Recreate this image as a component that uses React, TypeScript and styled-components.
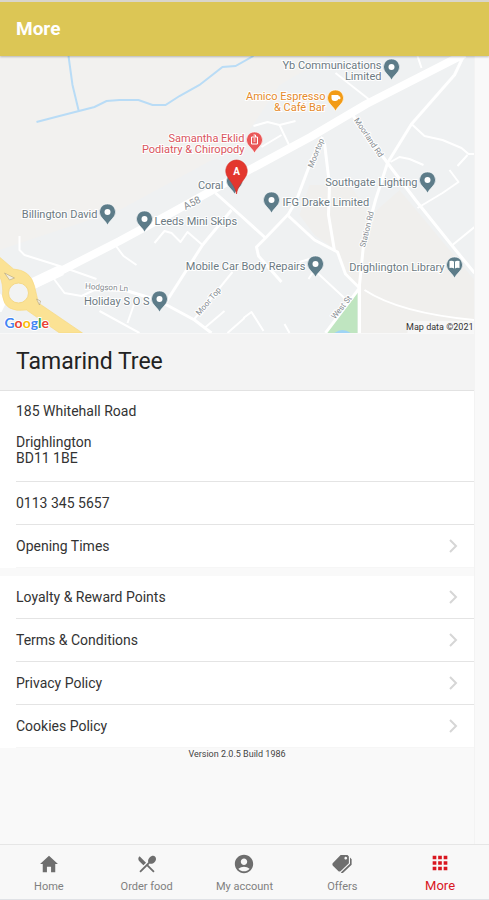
import React from "react";
import styled, { createGlobalStyle } from "styled-components";
import { IoMdHome, IoMdPricetags } from "react-icons/io";
import { MdAccountCircle, MdApps, MdRestaurantMenu } from "react-icons/md";

const GlobalStyle = createGlobalStyle`
  *, *::before, *::after { box-sizing: border-box; }
  body {
    margin: 0;
    background: #f9f9f9;
    color: #333;
    font-family: Roboto, "Liberation Sans", sans-serif;
    font-size: 14px;
  }
`;

const Screen = styled.div`
  display: flex;
  flex-direction: column;
  min-height: 100vh;
`;

const Header = styled.header`
  display: flex;
  align-items: center;
  height: 56px;
  padding: 0 16px;
  border-top: 2px solid #d9d5cb;
  background: #dcc655;
  box-shadow: 0 1px 2px rgba(0, 0, 0, 0.25);
  z-index: 1;
`;

const HeaderTitle = styled.h1`
  margin: 0;
  color: #fff;
  font-size: 19px;
  line-height: 24px;
  font-weight: 700;
`;

const Content = styled.main`
  flex: 1;
  margin-right: 14px;
  border-right: 1px solid #f3f3f3;
`;

const MapView = styled.svg`
  display: block;
  width: 100%;
  height: 277px;
  background: #f2f1ef;
`;

const VenueName = styled.h2`
  margin: 0;
  padding: 14px 16px;
  border-top: 1px solid #f8f8f8;
  border-bottom: 1px solid #e2e2e2;
  background: #f3f3f3;
  color: #222;
  font-size: 23px;
  line-height: 28px;
  font-weight: 400;
`;

const List = styled.div<{ $spaced?: boolean }>`
  margin-top: ${(p) => (p.$spaced ? 8 : 0)}px;
  padding-left: 16px;
  background: #fff;
`;

const Address = styled.address`
  padding: 12px 16px 15px 0;
  border-bottom: 1px solid #e4e4e4;
  font-style: normal;
  line-height: 16px;
`;

const AddressLine = styled.div<{ $gap?: boolean }>`
  margin-bottom: ${(p) => (p.$gap ? 15 : 0)}px;
`;

const Row = styled.a`
  display: flex;
  align-items: center;
  justify-content: space-between;
  height: 43px;
  padding-right: 16px;
  border-bottom: 1px solid #e4e4e4;
  color: inherit;
  line-height: 16px;
  text-decoration: none;
  &:last-child { border-bottom-color: #f6f6f6; }
`;

const Arrow = styled.svg`
  width: 10px;
  height: 16px;
  fill: none;
  stroke: #d6d6d6;
  stroke-width: 2;
`;

const Version = styled.p`
  margin: 0;
  text-align: center;
  color: #444;
  font-size: 9px;
  line-height: 12px;
`;

const TabBar = styled.nav`
  display: grid;
  grid-template-columns: repeat(5, 1fr);
  height: 56px;
  border-top: 1px solid #e6e6e6;
  border-bottom: 1px solid #e0e2e6;
  background: #f8f8f8;
`;

const Tab = styled.button<{ $active?: boolean }>`
  display: flex;
  flex-direction: column;
  align-items: center;
  gap: 4px;
  padding: ${(p) => (p.$active ? 7 : 8)}px 0 0;
  border: 0;
  background: none;
  color: ${(p) => (p.$active ? "#d9161f" : "#808080")};
  font-family: inherit;
  font-size: ${(p) => (p.$active ? 13 : 11)}px;
  line-height: 16px;
  cursor: pointer;
  svg {
    width: 22px;
    height: 22px;
    color: ${(p) => (p.$active ? "#d9161f" : "#6e6e6e")};
  }
`;

const Label = styled.text<{ $tone?: string; $end?: boolean }>`
  font-family: Roboto, "Liberation Sans", sans-serif;
  font-size: 11px;
  fill: ${(p) => p.$tone ?? "#6c7a82"};
  stroke: #fff;
  stroke-width: 2px;
  paint-order: stroke;
  text-anchor: ${(p) => (p.$end ? "end" : "start")};
`;

const StreetLabel = styled.text<{ $large?: boolean }>`
  font-family: Roboto, "Liberation Sans", sans-serif;
  font-size: ${(p) => (p.$large ? 10 : 8)}px;
  fill: #858b90;
  stroke: #fff;
  stroke-width: 2px;
  paint-order: stroke;
  text-anchor: middle;
`;

const Credit = styled.text`
  font-family: Roboto, "Liberation Sans", sans-serif;
  font-size: 9px;
  fill: #333;
  text-anchor: end;
`;

const MarkerLetter = styled.text`
  font-family: Roboto, "Liberation Sans", sans-serif;
  font-size: 10px;
  font-weight: 700;
  fill: #fff;
  text-anchor: middle;
`;

const Brand = styled.text`
  font-family: Lato, "Liberation Sans", sans-serif;
  font-size: 14px;
  font-weight: 700;
  stroke: #fff;
  stroke-width: 2px;
  paint-order: stroke;
`;

const brandLetters = [
  ["G", "#4285f4"], ["o", "#ea4335"], ["o", "#fbbc05"],
  ["g", "#4285f4"], ["l", "#34a853"], ["e", "#ea4335"],
];

const minorRoads = [
  "M336 73L369 99", "M418 56L422 68",
  "M412 124L425 136L443 140L462 148L469 154H475M468 155L458 166",
  "M391 162L400 157L410 159L424 165",
  "M254 126L268 122L280 125L296 121M280 125L291 148M282 135L262 147",
  "M450 170L459 182L443 193L418 208", "M453 245L475 227",
  "M318 273L346 299", "M365 290Q400 313 475 320",
  "M244 318L252 312L264 331", "M285 324L290 333",
  "M155 243L165 231L172 233L181 242L188 232L203 245",
  "M115 244L124 256L137 265", "M20 236V250L25 255L60 266L97 279",
  "M53 277L65 293L82 296L95 290L128 291", "M100 311L140 333M136 300L128 323",
  "M233 272L194 320", "M225 311L205 328M245 318L228 333",
  "M310 259L300 262", "M315 270L309 279",
];

const roads = [
  "M464 56L455 75L412 124L388 163L376 200L364 245L360 285V333",
  "M353 115L388 163L416 200L452 245L475 273",
  "M323 137L312 160L297 200L289 214L266 238L257 247L259 256L282 282",
  "M325 143L330 185L329 215L335 251",
  "M289 216L315 240L338 252L346 274L360 288L326 333",
  "M216 193L244 218L266 238", "M232 210L203 245L166 303",
  "M128 291L158 300L195 320L212 333",
];

type PinProps = { x: number; y: number; fill?: string; children?: React.ReactNode };

/* Teardrop marker; x/y locate the middle of its round head. */
const Pin = ({ x, y, fill = "#5d7c89", children }: PinProps) => (
  <g transform={`translate(${x} ${y})`}>
    <path d="M0-8A8 8 0 0 1 7 4C5 7 2 9 0 13C-2 9-5 7-7 4A8 8 0 0 1 0-8Z" fill={fill} stroke="#fff" strokeWidth="0.6" />
    {children ?? <circle r="3" fill="#fff" />}
  </g>
);

const VenueMap = () => (
  <MapView viewBox="0 56 475 277" preserveAspectRatio="xMidYMid slice" role="img" aria-label="Map of Drighlington">
    <path d="M0 250L120 210L240 145L280 85L330 56H475V333H0Z" fill="#eff1f2" />
    <path d="M300 215L315 235L338 251L346 274L360 288V333H475V280L400 190L372 215L350 185L310 185Z" fill="#f0efed" />
    <path d="M326 333L358 292V333Z" fill="#bfe5c0" />
    <path d="M335 333Q343 327 351 333Z" fill="#9fd4f5" />
    <path d="M69 56L73 85L79 110M37 122L60 116L95 107L107 101L120 100H139L153 105H166L180 96L200 85L223 67L236 66L254 56" fill="none" stroke="#b9dcf6" strokeWidth="2" />
    <g fill="none" stroke="#fff" strokeLinejoin="round">
      <g strokeWidth="2">{minorRoads.map((d) => <path key={d} d={d} />)}</g>
      <g strokeWidth="3">{roads.map((d) => <path key={d} d={d} />)}</g>
      <path d="M24 290L120 241L170 214L244 173L311 137L367 104L465 54" strokeWidth="8" />
      <path d="M20 290L62 270" strokeWidth="11" />
    </g>
    <path d="M0 293L8 300L2 312H0Z" fill="#fff" />
    <path d="M0 257L14 269Q31 270 35 286L39 303L83 333H60L27 310Q5 313 3 296Q4 284 0 276Z" fill="#fbe294" stroke="#f7d77d" strokeWidth="0.6" />
    <circle cx="19" cy="293" r="10" fill="#f2f3f3" stroke="#f4d98a" />
    <path d="M5 273L10 280L15 278ZM37 299L40 305L41 301Z" fill="#f3efe2" stroke="#b4a27a" strokeWidth="0.6" />

    <StreetLabel $large transform="translate(194 206) rotate(-27)">A58</StreetLabel>
    <StreetLabel transform="translate(319 154) rotate(-68)">Moortop</StreetLabel>
    <StreetLabel transform="translate(367 139) rotate(56)">Moorland Rd</StreetLabel>
    <StreetLabel transform="translate(370 230) rotate(-76)">Station Rd</StreetLabel>
    <StreetLabel transform="translate(344 309) rotate(-51)">West St</StreetLabel>
    <StreetLabel transform="translate(211 303) rotate(-50)">Moor Top</StreetLabel>
    <StreetLabel transform="translate(107 290) rotate(3)">Hodgson Ln</StreetLabel>

    <Label $end x="382" y="69">Yb Communications</Label>
    <Label $end x="382" y="80">Limited</Label>
    <Label $end x="326" y="100" $tone="#e58a2b">Amico Espresso</Label>
    <Label $end x="326" y="111" $tone="#e58a2b">&amp; Café Bar</Label>
    <Label $end x="245" y="142" $tone="#d9545c">Samantha Eklid</Label>
    <Label $end x="245" y="153" $tone="#d9545c">Podiatry &amp; Chiropody</Label>
    <Label $end x="224" y="189">Coral</Label>
    <Label $end x="98" y="218">Billington David</Label>
    <Label x="155" y="225">Leeds Mini Skips</Label>
    <Label x="283" y="206">IFG Drake Limited</Label>
    <Label $end x="418" y="186">Southgate Lighting</Label>
    <Label $end x="306" y="270">Mobile Car Body Repairs</Label>
    <Label $end x="445" y="271">Drighlington Library</Label>
    <Label $end x="150" y="305">Holiday S O S</Label>

    <Pin x={392} y={67} />
    <Pin x={336} y={98} fill="#f29b16">
      <path d="M-4-3H3V-2Q5-2 5 0T3 1Q2 3 0 3H-1Q-4 3-4 0Z" fill="#fff" />
    </Pin>
    <Pin x={255} y={140} fill="#e95757">
      <path d="M-3-3H3V4H-3ZM-1-5H1V-3M-1-1H1M-1 1H1" fill="none" stroke="#fff" />
    </Pin>
    <Pin x={235} y={181} />
    <Pin x={108} y={212} />
    <Pin x={145} y={219} />
    <Pin x={272} y={200} />
    <Pin x={428} y={180} />
    <Pin x={316} y={264} />
    <Pin x={160} y={299} />
    <Pin x={455} y={265}>
      <path d="M-5-4Q-2-5 0-3Q2-5 5-4V3Q2 2 0 4Q-2 2-5 3Z" fill="#fff" />
      <path d="M0-3V4" stroke="#5d7c89" />
    </Pin>
    <path d="M237 160A11 11 0 0 1 247 175C244 181 238 186 237 194C236 186 230 181 227 175A11 11 0 0 1 237 160Z" fill="#e3372e" stroke="#d42f27" strokeWidth="0.6" />
    <MarkerLetter x="237" y="175">A</MarkerLetter>

    <Brand x="5" y="328">
      {brandLetters.map(([letter, tone], i) => <tspan key={i} fill={tone}>{letter}</tspan>)}
    </Brand>
    <path d="M408 321H475V333H408Z" fill="#f7f7f7" />
    <Credit x="474" y="330">Map data ©2021</Credit>
  </MapView>
);

const Chevron = () => (
  <Arrow viewBox="0 0 10 16" aria-hidden="true"><path d="M2 2L8 8L2 14" /></Arrow>
);

const links = ["Loyalty & Reward Points", "Terms & Conditions", "Privacy Policy", "Cookies Policy"];

const tabs = [
  { label: "Home", Icon: IoMdHome },
  { label: "Order food", Icon: MdRestaurantMenu },
  { label: "My account", Icon: MdAccountCircle },
  { label: "Offers", Icon: IoMdPricetags },
  { label: "More", Icon: MdApps, active: true },
];

export default function App() {
  return (
    <>
      <GlobalStyle />
      <Screen>
        <Header><HeaderTitle>More</HeaderTitle></Header>
        <Content>
          <VenueMap />
          <VenueName>Tamarind Tree</VenueName>
          <List>
            <Address>
              <AddressLine $gap>185 Whitehall Road</AddressLine>
              <AddressLine>Drighlington</AddressLine>
              <AddressLine>BD11 1BE</AddressLine>
            </Address>
            <Row href="tel:01133455657">0113 345 5657</Row>
            <Row href="#opening-times">Opening Times<Chevron /></Row>
          </List>
          <List $spaced>
            {links.map((name) => (
              <Row key={name} href="#">{name}<Chevron /></Row>
            ))}
          </List>
          <Version>Version 2.0.5 Build 1986</Version>
        </Content>
        <TabBar>
          {tabs.map(({ label, Icon, active }) => (
            <Tab key={label} type="button" $active={active} aria-current={active ? "page" : undefined}>
              <Icon aria-hidden="true" />
              {label}
            </Tab>
          ))}
        </TabBar>
      </Screen>
    </>
  );
}
